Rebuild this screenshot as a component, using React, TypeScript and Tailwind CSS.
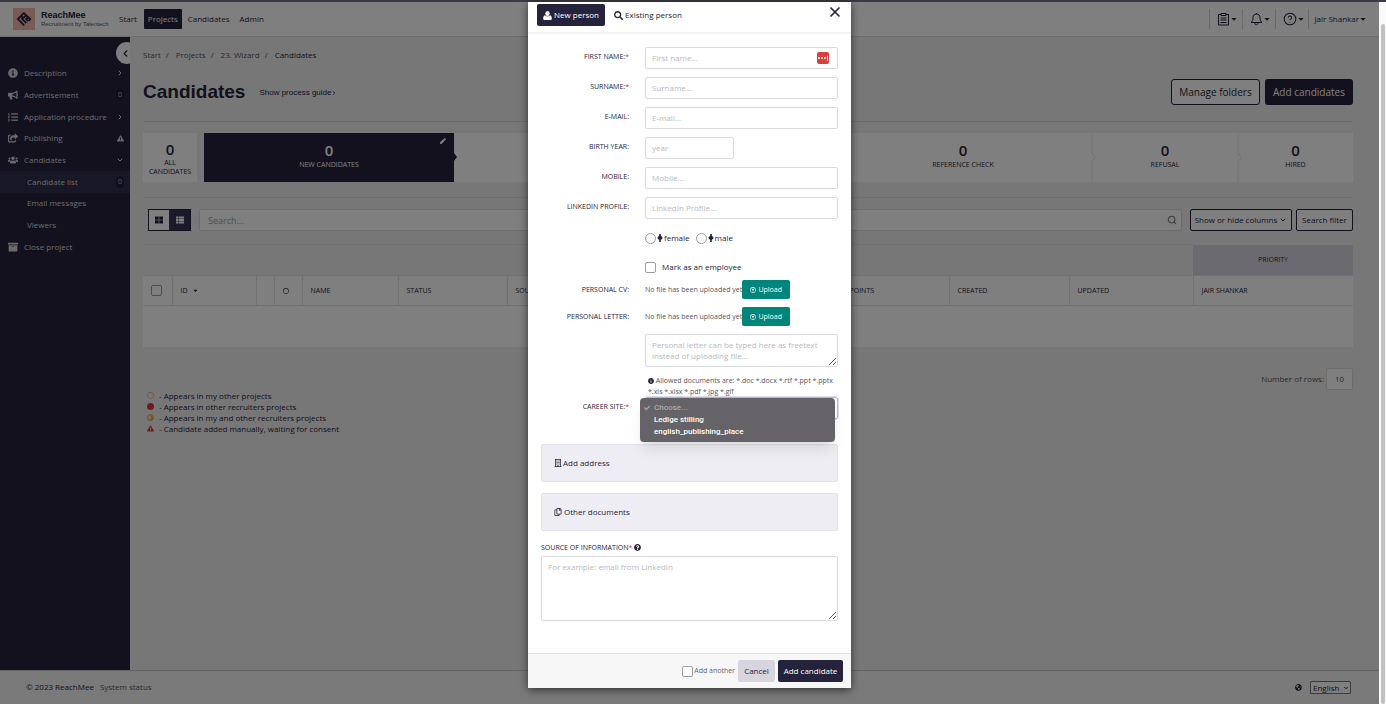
import { useState } from 'react';
import type { ReactNode } from 'react';
import {
  FaArchive,
  FaBullhorn,
  FaCaretDown,
  FaCheck,
  FaExclamationTriangle,
  FaGlobeAmericas,
  FaInfoCircle,
  FaListOl,
  FaPen,
  FaQuestionCircle,
  FaRegArrowAltCircleUp,
  FaRegBuilding,
  FaRegCircle,
  FaRegCopy,
  FaSearch,
  FaShareSquare,
  FaThLarge,
  FaThList,
  FaUsers,
} from 'react-icons/fa';
import { ChevronDown, ChevronLeft, ChevronRight, CircleHelp, Search, X } from 'lucide-react';

const menu = [
  { label: 'Description', icon: FaInfoCircle, end: 'right' },
  { label: 'Advertisement', icon: FaBullhorn, end: 'count' },
  { label: 'Application procedure', icon: FaListOl, end: 'right' },
  { label: 'Publishing', icon: FaShareSquare, end: 'warning' },
  { label: 'Candidates', icon: FaUsers, end: 'down' },
  { label: 'Candidate list', end: 'count', active: true },
  { label: 'Email messages' },
  { label: 'Viewers' },
  { label: 'Close project', icon: FaArchive },
];

const stages = [
  { label: '', size: 'flex-[380]' },
  { label: 'REFERENCE CHECK', size: 'flex-[258]' },
  { label: 'REFUSAL', size: 'flex-[146]' },
  { label: 'HIRED', size: 'flex-[115]' },
];

const fields = [
  { id: 'first', label: 'FIRST NAME:', placeholder: 'First name...', required: true },
  { id: 'surname', label: 'SURNAME:', placeholder: 'Surname...', required: true },
  { id: 'email', label: 'E-MAIL:', placeholder: 'E-mail...' },
  { id: 'year', label: 'BIRTH YEAR:', placeholder: 'year', short: true },
  { id: 'mobile', label: 'MOBILE:', placeholder: 'Mobile...' },
  { id: 'linkedin', label: 'LINKEDIN PROFILE:', placeholder: 'LinkedIn Profile...' },
];

const th = 'border-y border-r border-[#e2e2e2] px-2 text-left font-medium last:border-r-0';
const box = 'appearance-none border border-[#9b9ba6] bg-white';
const input =
  'rounded-[2px] border border-[#d9d9de] bg-white px-[6px] placeholder:text-[#b9b9c0]';

function Logo() {
  return (
    <svg viewBox="0 0 22 22" className="size-[22px]" aria-hidden="true">
      <rect width="22" height="22" fill="#f5b5ac" />
      <g fill="none" stroke="#25233a" strokeWidth="1.8">
        <path d="M11.2 4.6 4.9 11l6.2 6.3" />
        <path d="M13.4 6.8 9.2 11l4.1 4.2" />
        <path d="M15.4 8.8 13.2 11l2 2.1" />
        <path d="m10.6 4.8 6.6 6.2-1.6 1.8M8 7.8l2.6 2.6" />
      </g>
    </svg>
  );
}

function ClipboardIcon() {
  return (
    <svg viewBox="0 0 13 14" className="h-[14px] w-[13px]" fill="none" stroke="currentColor">
      <path d="M4 2.5H1.5v10.500h10V2.500H9" />
      <path d="M4 1.500h5v2H4zM3.500 6h6M3.500 8h6M3.500 10.500h6" />
    </svg>
  );
}

function BellIcon() {
  return (
    <svg viewBox="0 0 13 14" className="h-[14px] w-[13px]" fill="none" stroke="currentColor">
      <path d="M6.500 1v1M1 10.500c1.500-1 2-2.500 2-5 0-2 1.500-3.500 3.500-3.500S10 3.500 10 5.500c0 2.500.5 4 2 5z" />
      <path d="M5 11c0 2.500 3 2.500 3 0" />
    </svg>
  );
}

function UserIcon() {
  return (
    <svg viewBox="0 0 9 9" className="size-[9px]" fill="currentColor" aria-hidden="true">
      <ellipse cx="4.5" cy="2.500" rx="2.200" ry="2.500" />
      <path d="M1.800 4.300C.6 4.600.2 6 .2 7.400.2 8.400.8 9 1.700 9h5.600c.9 0 1.500-.6 1.500-1.600 0-1.400-.4-2.800-1.600-3.100-1.500 1.500-3.900 1.500-5.400 0z" />
    </svg>
  );
}

function PersonMark() {
  return (
    <svg viewBox="0 0 6 8" className="h-2 w-[6px]" fill="currentColor" aria-hidden="true">
      <path d="M2.200 0h1.600v1.500L5.800 4 3.800 6v2H2.200V6L.2 4l2-2.500z" />
    </svg>
  );
}

const tools = [
  { label: 'Tasks', icon: <ClipboardIcon /> },
  { label: 'Notifications', icon: <BellIcon /> },
  { label: 'Help', icon: <CircleHelp size={14} strokeWidth={1.75} /> },
];

function TopBar() {
  return (
    <header className="flex h-[35px] items-center border-b border-[#dcdcdc] bg-white pr-3 pl-[13px]">
      <a href="#" className="flex w-[106px] items-center gap-[6px]">
        <Logo />
        <span className="flex flex-col font-['Liberation_Sans',sans-serif]">
          <span className="text-[9px] leading-[10px] font-bold">ReachMee</span>
          <span className="text-[6px] leading-[8px] whitespace-nowrap text-[#55555f]">
            Recruitment by Talentech
          </span>
        </span>
      </a>
      <nav className="flex items-center">
        <a href="#" className="mr-[7px]">Start</a>
        <a href="#" className="mr-[6px] rounded-[1px] bg-[#25233c] px-1 py-1 text-white">
          Projects
        </a>
        <a href="#" className="mr-[10px]">Candidates</a>
        <a href="#">Admin</a>
      </nav>
      <div className="ml-auto flex items-center">
        {tools.map(({ label, icon }) => (
          <button
            key={label}
            aria-label={label}
            className="flex h-5 w-[33px] items-center border-l border-[#d2d2d2] pl-[7px]"
          >
            {icon}
            <FaCaretDown size={8} />
          </button>
        ))}
        <button className="flex h-5 items-center border-l border-[#d2d2d2] pl-[5px] whitespace-nowrap">
          Jair Shankar
          <FaCaretDown size={8} />
        </button>
      </div>
    </header>
  );
}

function Sidebar() {
  return (
    <aside className="relative w-[130px] shrink-0 overflow-hidden bg-[#25233a] text-[#d5d5dd]">
      <button
        aria-label="Collapse menu"
        className="absolute top-[5px] left-[116px] flex size-[22px] items-center rounded-full bg-[#fafafa] pl-1 text-[#25233a]"
      >
        <ChevronLeft size={11} strokeWidth={2.5} />
      </button>
      <nav className="mt-[26px] flex h-[195px] flex-col">
        {menu.map(({ label, icon: Icon, end, active }) => (
          <a
            key={label}
            href="#"
            className={`flex flex-1 items-center pr-[6px] pb-[1px] ${active ? 'bg-[#302e4a]' : ''} ${
              Icon ? 'gap-[6px] pl-2' : 'pl-[27px]'
            }`}
          >
            {Icon && <Icon size={10} />}
            <span className="flex-1 whitespace-nowrap">{label}</span>
            {end === 'right' && <ChevronRight size={8} strokeWidth={3} />}
            {end === 'down' && <ChevronDown size={8} strokeWidth={3} />}
            {end === 'warning' && <FaExclamationTriangle size={7} />}
            {end === 'count' && (
              <span className="rounded-full bg-[#201e32] px-[2px] text-[7px] text-[#b0b0ba]">0</span>
            )}
          </a>
        ))}
      </nav>
    </aside>
  );
}

function Stages() {
  return (
    <div className="mt-[11px] flex h-[49px] text-center text-[7px] leading-[9px] font-medium">
      <button className="mr-[7px] w-[54px] bg-white pt-[2px]">
        <span className="block text-[15px] leading-[17px] font-semibold">0</span>
        ALL CANDIDATES
      </button>
      <button className="relative flex flex-[250] flex-col items-center bg-[#25233a] pt-2 text-white">
        <span className="text-[15px] leading-[18px] font-semibold">0</span>
        <span className="leading-[11px]">NEW CANDIDATES</span>
        <FaPen size={6} className="absolute top-[5px] right-2" />
        <svg viewBox="0 0 3 8" className="absolute top-5 -right-[3px] z-10 h-2 w-[3px]">
          <path d="M0 0 3 4 0 8z" fill="#25233a" />
        </svg>
      </button>
      {stages.map(({ label, size }, i) => (
        <div key={i} className={`relative flex flex-col items-center bg-white pt-2 ${size}`}>
          {label && <span className="text-[15px] leading-[18px] font-semibold">0</span>}
          <span className="leading-[11px]">{label}</span>
          {i > 0 && i < 3 && (
            <svg
              viewBox="0 0 5 49"
              className="absolute top-0 -right-1 z-10 h-[49px] w-[5px]"
              fill="none"
              stroke="#e8e8e8"
            >
              <path d="M1 0v20l3 4.5-3 4.5v20" />
            </svg>
          )}
        </div>
      ))}
    </div>
  );
}

function CandidateTable() {
  return (
    <table className="mt-[13px] w-full table-fixed border-collapse text-[7px]">
      <colgroup>
        <col className="w-[29px]" />
        <col className="w-[84px]" />
        <col className="w-[18px]" />
        <col className="w-[28px]" />
        <col className="w-[96px]" />
        <col className="w-[109px]" />
        <col />
        <col className="w-[108px]" />
        <col className="w-[120px]" />
        <col className="w-[124px]" />
        <col className="w-[160px]" />
      </colgroup>
      <thead>
        <tr className="h-[31px]">
          <td colSpan={10} className="border-y border-[#e2e2e2]" />
          <th className="bg-[#d5d5e0] font-medium">PRIORITY</th>
        </tr>
        <tr className="h-[30px] bg-white">
          <th className={th}>
            <input
              type="checkbox"
              aria-label="Select all"
              className={`${box} block size-[11px] rounded-[2px]`}
            />
          </th>
          <th className={th}>
            <span className="flex items-center gap-1">
              ID <FaCaretDown size={7} />
            </span>
          </th>
          <th className={th} />
          <th className={th}>
            <FaRegCircle size={6} />
          </th>
          <th className={th}>NAME</th>
          <th className={th}>STATUS</th>
          <th className={th}>SOURCE</th>
          <th className={th}>POINTS</th>
          <th className={th}>CREATED</th>
          <th className={th}>UPDATED</th>
          <th className={th}>JAIR SHANKAR</th>
        </tr>
      </thead>
      <tbody>
        <tr className="h-[41px] bg-white">
          <td colSpan={11} />
        </tr>
      </tbody>
    </table>
  );
}

function Legend() {
  return (
    <ul className="pl-1 leading-[11px]">
      <li className="flex items-center gap-[5px]">
        <FaRegCircle size={7} color="#f0ad4e" /> - Appears in my other projects
      </li>
      <li className="flex items-center gap-[5px]">
        <span className="size-[7px] rounded-full bg-[#e0323c]" /> - Appears in other recruiters
        projects
      </li>
      <li className="flex items-center gap-[5px]">
        <svg viewBox="0 0 7 7" className="size-[7px]">
          <circle cx="3.5" cy="3.5" r="2.8" fill="none" stroke="#f0ad4e" strokeWidth="1.3" />
          <path d="M3.5.5a3 3 0 0 1 0 6z" fill="#f0ad4e" />
        </svg>
        - Appears in my and other recruiters projects
      </li>
      <li className="flex items-center gap-[5px]">
        <FaExclamationTriangle size={7} color="#e0323c" /> - Candidate added manually, waiting for
        consent
      </li>
    </ul>
  );
}

function Main() {
  return (
    <main className="min-w-0 flex-1 pr-[26px] pl-[13px]">
      <nav className="flex h-9 items-center gap-[5px] text-[#55555f]" aria-label="Breadcrumb">
        <a href="#">Start</a>/<a href="#" className="ml-[2px]">Projects</a>/
        <a href="#" className="ml-[2px]">23. Wizard</a>/
        <span className="ml-[2px] text-[#25233a]">Candidates</span>
      </nav>
      <div className="mt-[6px] flex items-center">
        <h1 className="font-['Liberation_Sans',sans-serif] text-[19px] leading-6 font-bold">
          Candidates
        </h1>
        <a href="#" className="ml-[14px] flex items-center pt-[2px] font-['Liberation_Sans',sans-serif]">
          Show process guide
          <ChevronRight size={6} strokeWidth={3} />
        </a>
        <div className="ml-auto flex gap-[5px] text-[10px]">
          <button className="h-[26px] w-[89px] rounded-[3px] border border-[#25233a] bg-white whitespace-nowrap">
            Manage folders
          </button>
          <button className="h-[26px] w-[88px] rounded-[3px] bg-[#25233a] whitespace-nowrap text-white">
            Add candidates
          </button>
        </div>
      </div>
      <hr className="mt-4 border-[#d8d8d8]" />
      <Stages />
      <hr className="mt-[15px] border-[#dedede]" />
      <div className="mt-[11px] flex h-[22px] pl-[5px]">
        <div className="flex border border-[#25233a]">
          <button aria-label="Grid view" className="flex w-5 items-center justify-center bg-white">
            <FaThLarge size={8} />
          </button>
          <button
            aria-label="List view"
            className="flex w-[21px] items-center justify-center bg-[#37355a] text-white"
          >
            <FaThList size={8} />
          </button>
        </div>
        <div className="relative mx-2 flex-1">
          <input
            type="text"
            aria-label="Search"
            placeholder="Search..."
            className="size-full rounded-[2px] border border-[#dadada] bg-white px-2 text-[9px] placeholder:text-[#9c9ca2]"
          />
          <Search size={10} strokeWidth={2.5} className="absolute top-[6px] right-[5px] text-[#77777f]" />
        </div>
        <button className="mr-1 flex w-[102px] items-center justify-center gap-[2px] rounded-[2px] border border-[#25233a] bg-white whitespace-nowrap">
          Show or hide columns <ChevronDown size={8} strokeWidth={3} />
        </button>
        <button className="w-[57px] rounded-[2px] border border-[#25233a] bg-white whitespace-nowrap">
          Search filter
        </button>
      </div>
      <CandidateTable />
      <div className="mt-[21px] flex items-center justify-end gap-[2px] text-[#55555f]">
        <label htmlFor="rows">Number of rows:</label>
        <input
          id="rows"
          defaultValue="10"
          className="h-[22px] w-[27px] rounded-[2px] border border-[#dadada] bg-white text-center"
        />
      </div>
      <Legend />
    </main>
  );
}

function Footer() {
  return (
    <footer className="flex h-[34px] items-center border-t border-[#c8c8c8] bg-[#f4f4f4] pr-7 pb-[1px] pl-[26px]">
      <span>© 2023 ReachMee</span>
      <a href="#" className="ml-[6px] text-[#55555f]">System status</a>
      <FaGlobeAmericas size={7} className="mr-2 ml-auto" />
      <div className="relative">
        <select
          aria-label="Language"
          className="block h-[13px] w-[41px] appearance-none rounded-[1px] border border-[#77777f] bg-white pl-[2px] leading-[11px]"
        >
          <option>English</option>
        </select>
        <ChevronDown size={6} strokeWidth={4} className="pointer-events-none absolute top-1 right-[2px]" />
      </div>
    </footer>
  );
}

function Row({ id, label, required, children }: {
  id?: string;
  label?: string;
  required?: boolean;
  children: ReactNode;
}) {
  return (
    <div className="grid grid-cols-[88px_minmax(0,1fr)] gap-x-4">
      <label htmlFor={id} className="pt-[5px] text-right text-[7px] leading-[9px] font-medium whitespace-nowrap">
        {label}
        {required && <span className="text-[#e0323c]">*</span>}
      </label>
      <div>{children}</div>
    </div>
  );
}

function Upload() {
  return (
    <div className="flex h-[19px] items-center text-[7px] whitespace-nowrap text-[#55555f]">
      No file has been uploaded yet
      <button
        type="button"
        className="flex h-[19px] w-12 items-center justify-center gap-[2px] rounded-[2px] bg-[#00857a] text-white"
      >
        <FaRegArrowAltCircleUp size={6} />
        Upload
      </button>
    </div>
  );
}

function CareerSite() {
  const [site, setSite] = useState('Choose...');
  const sites = ['Choose...', 'Ledige stilling', 'english_publishing_place'];

  return (
    <div className="relative">
      <select
        id="career"
        value={site}
        onChange={(e) => setSite(e.target.value)}
        className="block h-[22px] w-full appearance-none rounded-[2px] border border-[#b5b3d6] bg-white px-[6px] outline-1 outline-[#dcdbef]"
      >
        {sites.map((s) => (
          <option key={s}>{s}</option>
        ))}
      </select>
      <ul
        role="listbox"
        aria-label="Career site"
        className="absolute top-[1px] right-[3px] -left-[5px] z-10 rounded-[4px] bg-[#656367] py-1 font-['Roboto',sans-serif] leading-3 font-medium text-white shadow-lg"
      >
        {sites.map((s) => (
          <li
            key={s}
            role="option"
            aria-selected={s === site}
            onClick={() => setSite(s)}
            className={`flex items-center ${s === 'Choose...' ? 'text-[#a9a8ab]' : ''}`}
          >
            <span className="flex w-[14px] justify-center">{s === site && <FaCheck size={6} />}</span>
            {s}
          </li>
        ))}
      </ul>
    </div>
  );
}

function CandidateDialog() {
  return (
    <div
      role="dialog"
      aria-label="Add candidate"
      className="flex w-[323px] flex-col rounded-b-[2px] bg-white shadow-[0_2px_8px_rgba(0,0,0,0.6)]"
    >
      <div className="flex h-8 items-start border-b-2 border-[#f3f3f3] pt-[2px] pr-2 pl-[9px]">
        <button className="flex h-[22px] w-[68px] items-center justify-center gap-[2px] rounded-[2px] bg-[#25233c] whitespace-nowrap text-white">
          <UserIcon />
          New person
        </button>
        <button className="ml-[9px] flex h-[22px] items-center gap-[2px] whitespace-nowrap">
          <FaSearch size={9} />
          Existing person
        </button>
        <button type="button" aria-label="Close" className="ml-auto">
          <X size={16} strokeWidth={2.5} />
        </button>
      </div>

      <form className="px-[13px] pt-[13px] pb-8">
        <div className="flex flex-col gap-2">
          {fields.map(({ id, label, placeholder, required, short }) => (
            <Row key={id} id={id} label={label} required={required}>
              <div className="relative">
                <input
                  id={id}
                  type="text"
                  placeholder={placeholder}
                  className={`${input} block h-[22px] pb-[2px] ${short ? 'w-[89px]' : 'w-full'}`}
                />
                {id === 'first' && (
                  <span className="absolute top-[5px] right-[9px] flex h-3 w-3 items-center justify-center gap-[1px] rounded-[2px] bg-[#dc3d3d]">
                    <i className="size-[2px] rounded-full bg-white" />
                    <i className="size-[2px] rounded-full bg-white" />
                    <i className="size-[2px] rounded-full bg-white" />
                    <i className="h-[5px] w-[1px] bg-white" />
                  </span>
                )}
              </div>
            </Row>
          ))}
        </div>

        <div className="mt-[13px] ml-[104px] flex items-center gap-[6px] font-medium">
          {['female', 'male'].map((g) => (
            <label key={g} className="flex h-3 items-center gap-[1px]">
              <input type="radio" name="gender" className={`${box} size-[11px] rounded-full`} />
              <PersonMark />
              {g}
            </label>
          ))}
        </div>
        <label className="mt-[17px] ml-[104px] flex h-3 items-center gap-[6px]">
          <input type="checkbox" className={`${box} size-[11px] rounded-[2px]`} />
          Mark as an employee
        </label>

        <div className="mt-[7px] flex flex-col gap-2">
          <Row label="PERSONAL CV:">
            <Upload />
          </Row>
          <Row id="letter" label="PERSONAL LETTER:">
            <Upload />
            <textarea
              id="letter"
              placeholder="Personal letter can be typed here as freetext instead of uploading file..."
              className={`${input} mt-2 block h-[33px] w-full py-1 leading-[11px]`}
            />
            <p className="mt-2 pl-[3px] text-[7px] leading-[11px] text-[#55555f]">
              <FaInfoCircle size={6} className="inline align-[-1px] text-[#25233a]" /> Allowed
              documents are: *.doc *.docx *.rtf *.ppt *.pptx *.xls *.xlsx *.pdf *.jpg *.gif
            </p>
          </Row>
        </div>
        <Row id="career" label="CAREER SITE:" required>
          <CareerSite />
        </Row>

        <button
          type="button"
          className="mt-[25px] flex h-[38px] w-full items-center gap-[1px] rounded-[2px] border border-[#e2e2ea] bg-[#eeedf3] px-3"
        >
          <FaRegBuilding size={8} />
          Add address
        </button>
        <button
          type="button"
          className="mt-[11px] flex h-[38px] w-full items-center gap-[2px] rounded-[2px] border border-[#e2e2ea] bg-[#eeedf3] px-3"
        >
          <FaRegCopy size={8} />
          Other documents
        </button>

        <label
          htmlFor="source"
          className="mt-3 flex items-center text-[7px] leading-[9px] font-medium"
        >
          SOURCE OF INFORMATION<span className="mr-[2px] text-[#e0323c]">*</span>
          <FaQuestionCircle size={7} />
        </label>
        <textarea
          id="source"
          placeholder="For example: email from LinkedIn"
          className={`${input} mt-1 block h-[65px] w-full py-1 leading-[11px]`}
        />
      </form>

      <div className="flex h-[35px] items-center justify-end gap-[3px] border-t border-[#dfdfdf] bg-[#f7f7f7] pr-2">
        <label className="flex items-center gap-[1px] text-[7px] text-[#66666f]">
          <input type="checkbox" className={`${box} size-[11px] rounded-[2px]`} />
          Add another
        </label>
        <button className="h-[22px] w-[37px] rounded-[2px] bg-[#d7d6de]">Cancel</button>
        <button className="h-[22px] w-[65px] rounded-[2px] bg-[#25233c] whitespace-nowrap text-white">
          Add candidate
        </button>
      </div>
    </div>
  );
}

export default function App() {
  return (
    <div className="flex min-h-screen flex-col font-['Open_Sans',sans-serif] text-[8px] leading-3 text-[#25233a]">
      <div className="h-[2px] bg-[#3c3a42]" />
      <div className="flex flex-1">
        <div className="relative flex min-w-0 flex-1 flex-col bg-[#efefef]">
          <TopBar />
          <div className="flex flex-1">
            <Sidebar />
            <Main />
          </div>
          <Footer />
          <div className="absolute inset-0 z-20 flex items-start justify-center bg-black/50">
            <CandidateDialog />
          </div>
        </div>
        <div className="flex w-[7px] justify-end bg-[#fafafa] pt-[22px] pr-[1px]">
          <div className="w-1 rounded-full bg-[#c1c1c1]" />
        </div>
      </div>
    </div>
  );
}
